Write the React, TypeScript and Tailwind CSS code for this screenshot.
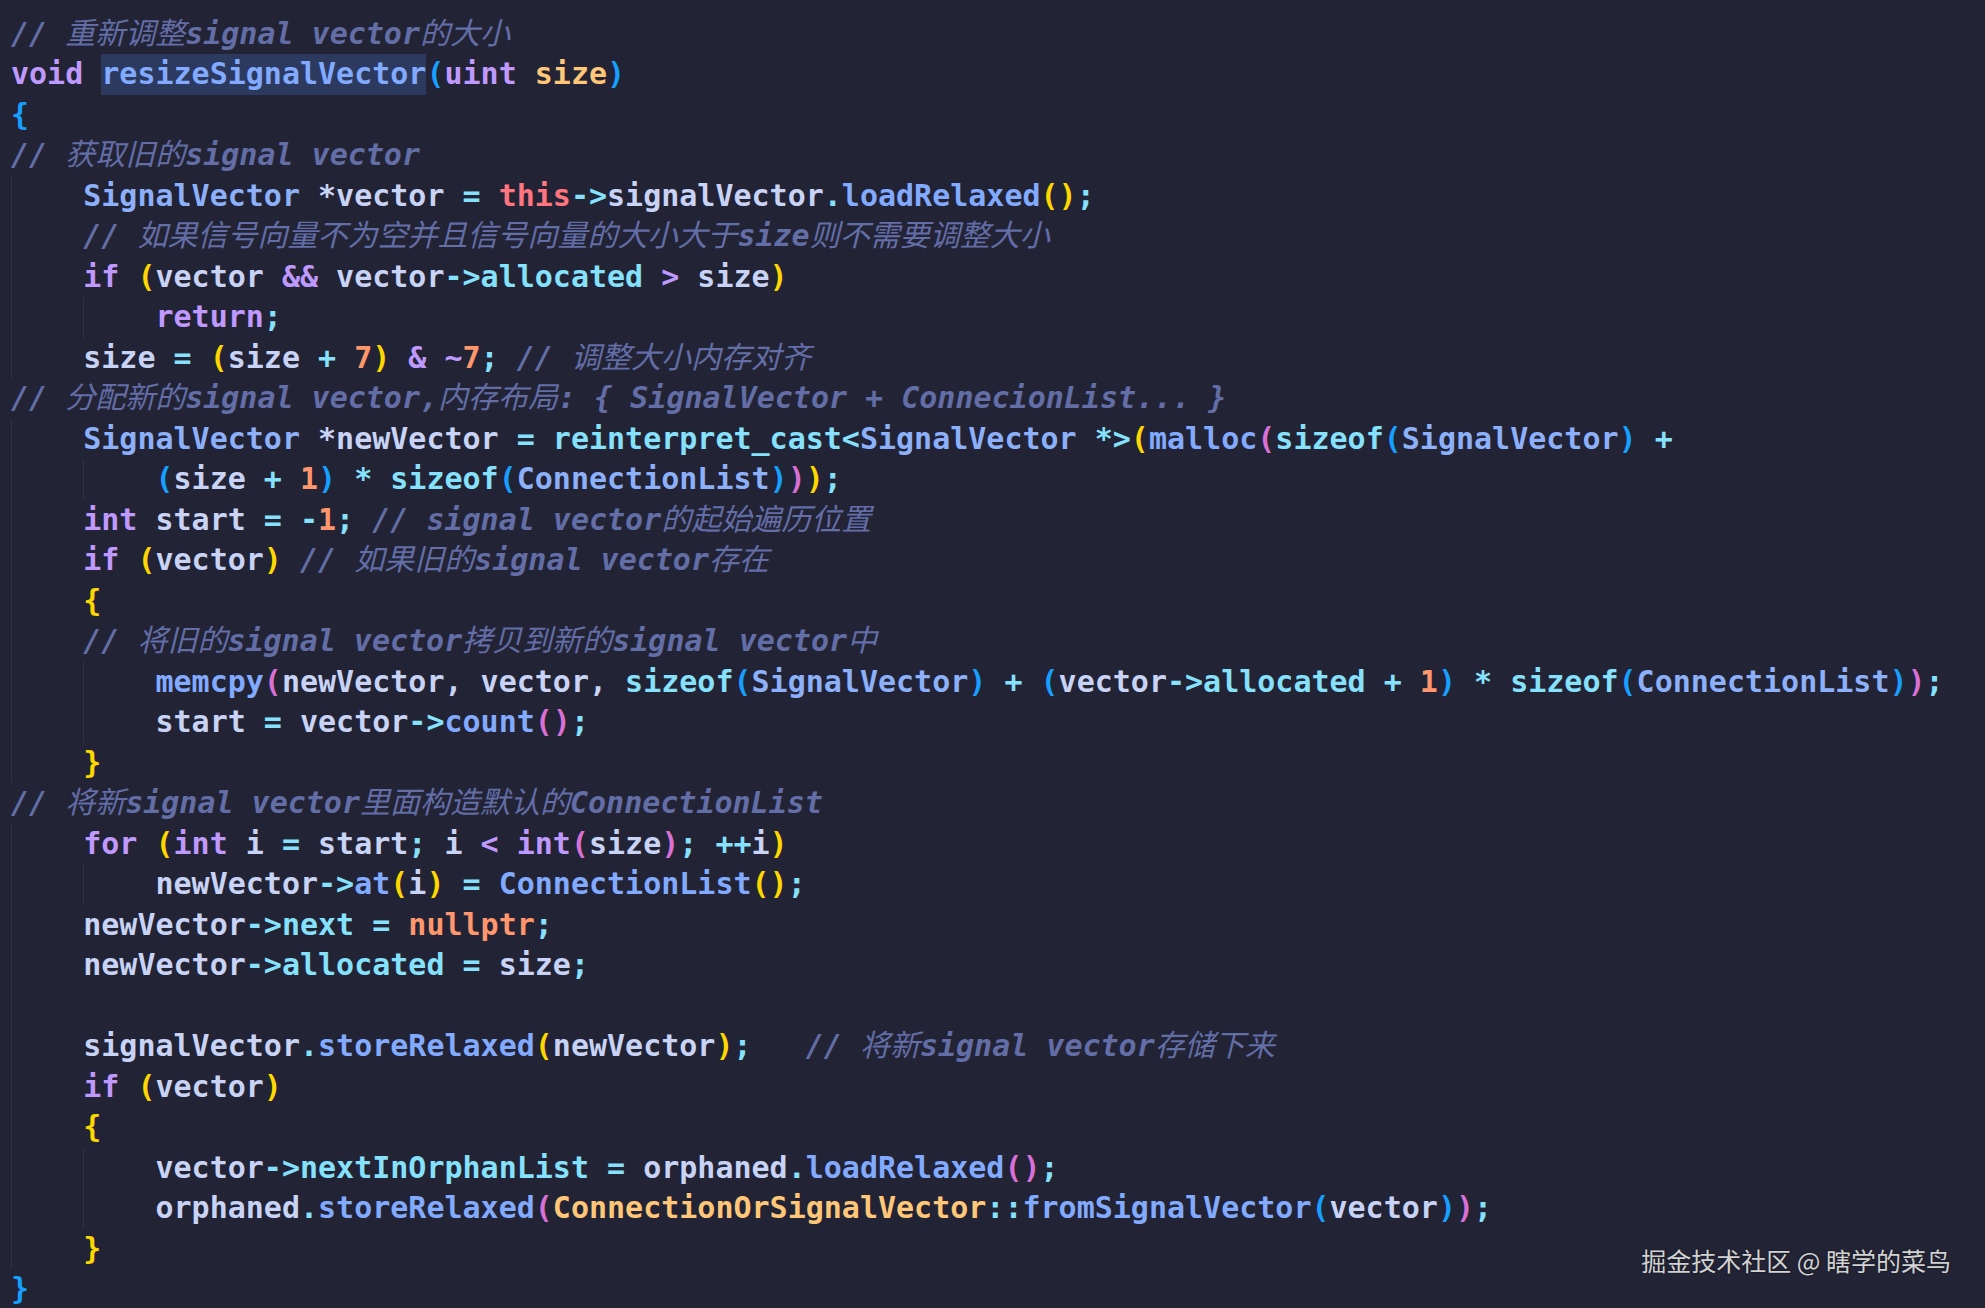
import React from "react";

type Tok = [string, string];
type Line = { indent: number; toks: Tok[] };

const K = "text-[#c099ff]";
const F = "text-[#82aaff]";
const FH = "text-[#82aaff] bg-[#2c3a60] inline-block leading-[40.5px]";
const T = "text-[#8db0fa]";
const V = "text-[#c8d3f5]";
const P = "text-[#86e1fc]";
const O = "text-[#86e1fc]";
const N = "text-[#ff966c]";
const R = "text-[#ff757f]";
const Y = "text-[#ffc777]";
const B1 = "text-[#ffd700]";
const B2 = "text-[#da70d6]";
const B3 = "text-[#179fff]";
const S = "";
const C = "comment";

const lines: Line[] = [
  { indent: 0, toks: [[C, "// 重新调整signal vector的大小"]] },
  { indent: 0, toks: [[K, "void"], [S, " "], [FH, "resizeSignalVector"], [B3, "("], [K, "uint"], [S, " "], [Y, "size"], [B3, ")"]] },
  { indent: 0, toks: [[B3, "{"]] },
  { indent: 0, toks: [[C, "// 获取旧的signal vector"]] },
  { indent: 1, toks: [[T, "SignalVector"], [V, " *vector "], [O, "="], [S, " "], [R, "this"], [O, "->"], [V, "signalVector"], [O, "."], [F, "loadRelaxed"], [B1, "()"], [O, ";"]] },
  { indent: 1, toks: [[C, "// 如果信号向量不为空并且信号向量的大小大于size则不需要调整大小"]] },
  { indent: 1, toks: [[K, "if"], [S, " "], [B1, "("], [V, "vector "], [K, "&&"], [V, " vector"], [O, "->"], [P, "allocated"], [S, " "], [K, ">"], [V, " size"], [B1, ")"]] },
  { indent: 2, toks: [[K, "return"], [O, ";"]] },
  { indent: 1, toks: [[V, "size "], [O, "="], [S, " "], [B1, "("], [V, "size "], [O, "+"], [S, " "], [N, "7"], [B1, ")"], [S, " "], [K, "&"], [S, " "], [K, "~"], [N, "7"], [O, ";"], [S, " "], [C, "// 调整大小内存对齐"]] },
  { indent: 0, toks: [[C, "// 分配新的signal vector,内存布局: { SignalVector + ConnecionList... }"]] },
  { indent: 1, toks: [[T, "SignalVector"], [V, " *newVector "], [O, "="], [S, " "], [P, "reinterpret_cast"], [O, "<"], [T, "SignalVector"], [O, " *>"], [B1, "("], [F, "malloc"], [B2, "("], [P, "sizeof"], [B3, "("], [T, "SignalVector"], [B3, ")"], [S, " "], [O, "+"]] },
  { indent: 2, toks: [[B3, "("], [V, "size "], [O, "+"], [S, " "], [N, "1"], [B3, ")"], [S, " "], [O, "*"], [S, " "], [P, "sizeof"], [B3, "("], [T, "ConnectionList"], [B3, ")"], [B2, ")"], [B1, ")"], [O, ";"]] },
  { indent: 1, toks: [[K, "int"], [V, " start "], [O, "="], [S, " "], [O, "-"], [N, "1"], [O, ";"], [S, " "], [C, "// signal vector的起始遍历位置"]] },
  { indent: 1, toks: [[K, "if"], [S, " "], [B1, "("], [V, "vector"], [B1, ")"], [S, " "], [C, "// 如果旧的signal vector存在"]] },
  { indent: 1, toks: [[B1, "{"]] },
  { indent: 1, toks: [[C, "// 将旧的signal vector拷贝到新的signal vector中"]] },
  { indent: 2, toks: [[F, "memcpy"], [B2, "("], [V, "newVector, vector, "], [P, "sizeof"], [B3, "("], [T, "SignalVector"], [B3, ")"], [S, " "], [O, "+"], [S, " "], [B3, "("], [V, "vector"], [O, "->"], [P, "allocated"], [S, " "], [O, "+"], [S, " "], [N, "1"], [B3, ")"], [S, " "], [O, "*"], [S, " "], [P, "sizeof"], [B3, "("], [T, "ConnectionList"], [B3, ")"], [B2, ")"], [O, ";"]] },
  { indent: 2, toks: [[V, "start "], [O, "="], [V, " vector"], [O, "->"], [F, "count"], [B2, "()"], [O, ";"]] },
  { indent: 1, toks: [[B1, "}"]] },
  { indent: 0, toks: [[C, "// 将新signal vector里面构造默认的ConnectionList"]] },
  { indent: 1, toks: [[K, "for"], [S, " "], [B1, "("], [K, "int"], [V, " i "], [O, "="], [V, " start"], [O, ";"], [V, " i "], [K, "<"], [S, " "], [K, "int"], [B2, "("], [V, "size"], [B2, ")"], [O, ";"], [S, " "], [O, "++"], [V, "i"], [B1, ")"]] },
  { indent: 2, toks: [[V, "newVector"], [O, "->"], [F, "at"], [B1, "("], [V, "i"], [B1, ")"], [S, " "], [O, "="], [S, " "], [F, "ConnectionList"], [B1, "()"], [O, ";"]] },
  { indent: 1, toks: [[V, "newVector"], [O, "->"], [P, "next"], [S, " "], [O, "="], [S, " "], [N, "nullptr"], [O, ";"]] },
  { indent: 1, toks: [[V, "newVector"], [O, "->"], [P, "allocated"], [S, " "], [O, "="], [V, " size"], [O, ";"]] },
  { indent: 1, toks: [] },
  { indent: 1, toks: [[V, "signalVector"], [O, "."], [F, "storeRelaxed"], [B1, "("], [V, "newVector"], [B1, ")"], [O, ";"], [S, "   "], [C, "// 将新signal vector存储下来"]] },
  { indent: 1, toks: [[K, "if"], [S, " "], [B1, "("], [V, "vector"], [B1, ")"]] },
  { indent: 1, toks: [[B1, "{"]] },
  { indent: 2, toks: [[V, "vector"], [O, "->"], [P, "nextInOrphanList"], [S, " "], [O, "="], [V, " orphaned"], [O, "."], [F, "loadRelaxed"], [B2, "()"], [O, ";"]] },
  { indent: 2, toks: [[V, "orphaned"], [O, "."], [F, "storeRelaxed"], [B2, "("], [Y, "ConnectionOrSignalVector"], [O, "::"], [F, "fromSignalVector"], [B3, "("], [V, "vector"], [B3, ")"], [B2, ")"], [O, ";"]] },
  { indent: 1, toks: [[B1, "}"]] },
  { indent: 0, toks: [[B3, "}"]] },
];

const CJK = /([\u3000-\u303f\u3400-\u9fff\uff00-\uffef]+)/;

function Comment({ text }: { text: string }) {
  const parts = text.split(CJK).filter((p) => p.length > 0);
  return (
    <span className="text-[#636da6] italic">
      {parts.map((p, i) =>
        CJK.test(p) ? (
          <span key={i} className="font-normal leading-[30px]">
            {p}
          </span>
        ) : (
          <span key={i} className="font-bold">
            {p}
          </span>
        )
      )}
    </span>
  );
}

function CodeLine({ line }: { line: Line }) {
  const guides = [];
  for (let i = 0; i < line.indent; i++) {
    guides.push(<div key={i} className="w-[4ch] h-full shrink-0 border-l border-[#2f3347]" />);
  }
  return (
    <div className="flex h-[40.5px] items-stretch">
      {guides}
      <div className="whitespace-pre leading-[40.5px]">
        {line.toks.map(([cls, text], i) =>
          cls === C ? <Comment key={i} text={text} /> : (
            <span key={i} className={cls}>
              {text}
            </span>
          )
        )}
      </div>
    </div>
  );
}

export default function App() {
  return (
    <div className="relative w-full h-[1308px] overflow-hidden bg-[#222436]">
      <div className="pt-[13.5px] pl-[11px] font-bold text-[30px] font-['DejaVu_Sans_Mono','Noto_Sans_CJK_SC',monospace] text-[#c8d3f5]">
        {lines.map((l, i) => (
          <CodeLine key={i} line={l} />
        ))}
      </div>
      <div className="absolute right-[34px] bottom-[31px] text-[25px] leading-[34px] text-[#d2d2d2] font-['Noto_Sans_CJK_SC',sans-serif] [text-shadow:0_0_2px_rgba(0,0,0,0.6)]">
        掘金技术社区 @ 瞎学的菜鸟
      </div>
    </div>
  );
}
